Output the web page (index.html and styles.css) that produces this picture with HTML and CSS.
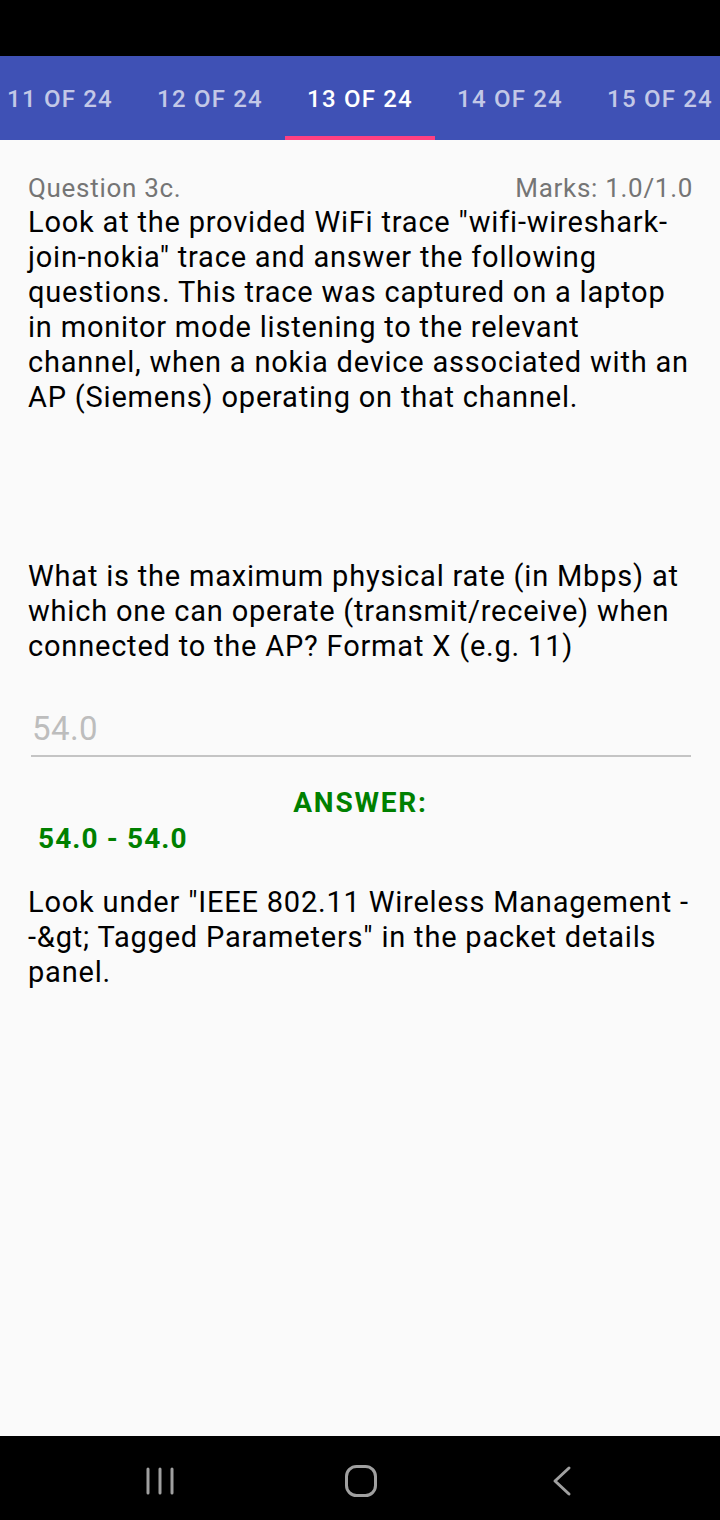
FILE: index.html
```html
<!DOCTYPE html>
<html>
<head>
<meta charset="utf-8">
<link rel="stylesheet" href="styles.css">
</head>
<body>
<div class="screen">
  <div class="statusbar"></div>
  <div class="tabs">
    <div class="tab">11 OF 24</div>
    <div class="tab">12 OF 24</div>
    <div class="tab active">13 OF 24</div>
    <div class="tab">14 OF 24</div>
    <div class="tab">15 OF 24</div>
  </div>
  <main class="content">
    <div class="qhead">
      <span class="qnum">Question 3c.</span>
      <span class="marks">Marks: 1.0/1.0</span>
    </div>
    <p class="text intro">Look at the provided WiFi trace "wifi-wireshark-join-nokia" trace and answer the following questions. This trace was captured on a laptop in monitor mode listening to the relevant channel, when a nokia device associated with an AP (Siemens) operating on that channel.</p>
    <p class="text question">What is the maximum physical rate (in Mbps) at which one can operate (transmit/receive) when connected to the AP? Format X (e.g. 11)</p>
    <div class="field"><span class="hint">54.0</span></div>
    <div class="answer-label">ANSWER:</div>
    <div class="answer-value">54.0 - 54.0</div>
    <p class="text explain">Look under "IEEE 802.11 Wireless Management -<wbr>-&amp;gt; Tagged Parameters" in the packet details panel.</p>
  </main>
  <nav class="navbar">
    <div class="nav-slot">
      <svg width="30" height="30" viewBox="0 0 30 30"><g stroke="#a0a0a0" stroke-width="3" stroke-linecap="round"><line x1="3" y1="3" x2="3" y2="27"/><line x1="15" y1="3" x2="15" y2="27"/><line x1="27" y1="3" x2="27" y2="27"/></g></svg>
    </div>
    <div class="nav-slot">
      <svg width="34" height="34" viewBox="0 0 34 34"><rect x="2.5" y="2.5" width="29" height="29" rx="10" fill="none" stroke="#a0a0a0" stroke-width="3"/></svg>
    </div>
    <div class="nav-slot">
      <svg width="24" height="32" viewBox="0 0 24 32"><polyline points="19,3 5,16 19,29" fill="none" stroke="#a0a0a0" stroke-width="3" stroke-linecap="round" stroke-linejoin="round"/></svg>
    </div>
  </nav>
</div>
</body>
</html>
```

FILE: styles.css
```css
* { box-sizing: border-box; }
html, body { margin: 0; padding: 0; }
body {
  font-family: Roboto, "Noto Sans", sans-serif;
  background: #000;
}
.screen {
  width: 720px;
  height: 1520px;
  display: flex;
  flex-direction: column;
  background: #fafafa;
  overflow: hidden;
}
.statusbar {
  height: 56px;
  background: #000;
  flex: none;
}
.tabs {
  height: 84px;
  flex: none;
  background: #3f51b5;
  display: flex;
  margin-left: -15px;
}
.tab {
  flex: none;
  width: 150px;
  display: flex;
  align-items: center;
  justify-content: center;
  color: rgba(255, 255, 255, 0.7);
  font-size: 24px;
  font-weight: 500;
  letter-spacing: 1.2px;
  white-space: nowrap;
  border-bottom: 4px solid transparent;
  padding-top: 5px;
}
.tab.active {
  color: #fff;
  border-bottom-color: #ff4081;
}
.content {
  flex: 1;
  padding: 31px 27px 0 28px;
}
.qhead {
  display: flex;
  justify-content: space-between;
  align-items: baseline;
  color: #757575;
  font-size: 26px;
  letter-spacing: 0.7px;
  line-height: 34px;
}
.text {
  margin: 0;
  color: #000;
  font-size: 29px;
  letter-spacing: 0.8px;
  line-height: 35px;
}
.intro { margin-bottom: 144px; }
.field {
  margin: 31px 2px 0 3px;
  border-bottom: 2px solid #c4c4c4;
  height: 62px;
  display: flex;
  align-items: center;
  padding-top: 6px;
}
.hint {
  color: #bdbdbd;
  font-size: 33px;
  letter-spacing: 0.4px;
  padding-left: 1px;
}
.answer-label {
  text-align: center;
  color: #008000;
  font-weight: 700;
  font-size: 28px;
  letter-spacing: 1.8px;
  line-height: 36px;
  margin-top: 28px;
}
.answer-value {
  color: #008000;
  font-weight: 700;
  font-size: 28px;
  letter-spacing: 1.1px;
  line-height: 36px;
  padding-left: 10px;
}
.explain { margin-top: 28px; }
.navbar {
  height: 84px;
  flex: none;
  background: #000;
  display: flex;
  align-items: center;
  gap: 141px;
  padding-left: 130px;
  padding-top: 6px;
}
.nav-slot {
  width: 60px;
  display: flex;
  justify-content: center;
  align-items: center;
}
```
